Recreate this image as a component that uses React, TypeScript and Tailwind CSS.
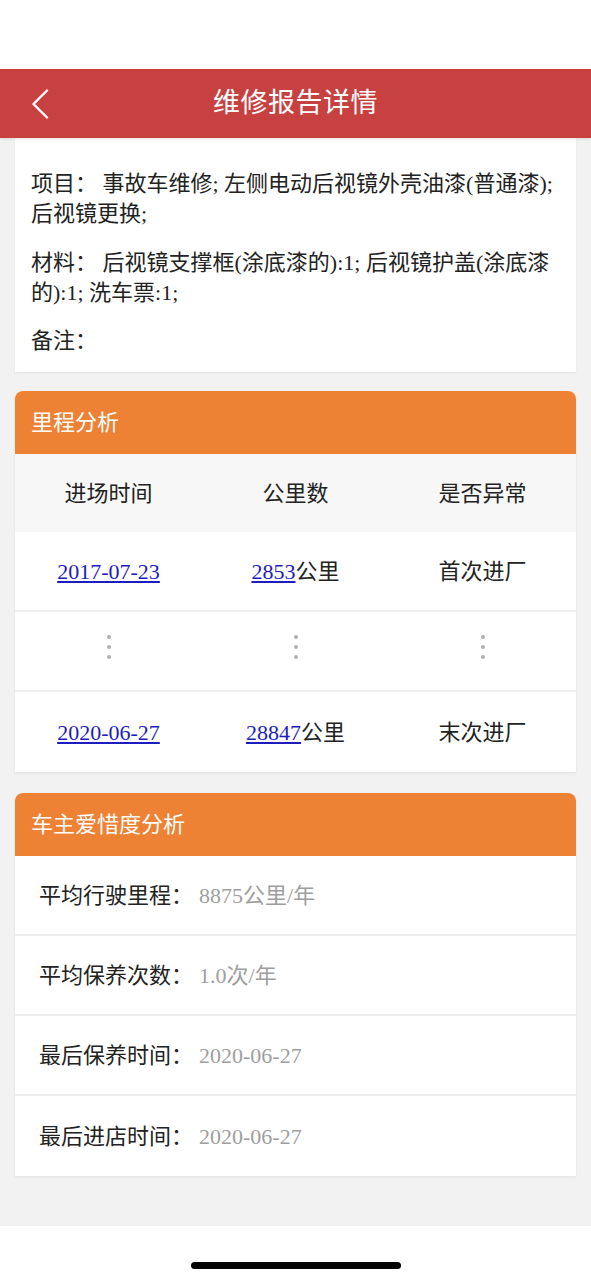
import React from 'react';

const mileageRows = [
  { date: '2017-07-23', km: '2853', note: '首次进厂' },
  { date: '2020-06-27', km: '28847', note: '末次进厂' },
];

const careRows = [
  { label: '平均行驶里程：', value: '8875公里/年' },
  { label: '平均保养次数：', value: '1.0次/年' },
  { label: '最后保养时间：', value: '2020-06-27' },
  { label: '最后进店时间：', value: '2020-06-27' },
];

const VDots: React.FC = () => (
  <div className="flex flex-col items-center gap-[6px] -mt-2">
    <span className="block h-[4px] w-[4px] rounded-full bg-[#b0b0b0]" />
    <span className="block h-[4px] w-[4px] rounded-full bg-[#b0b0b0]" />
    <span className="block h-[4px] w-[4px] rounded-full bg-[#b0b0b0]" />
  </div>
);

const SectionTitle: React.FC<{ title: string }> = ({ title }) => (
  <div className="flex h-[63px] items-center rounded-t-lg bg-[#ed8235] pl-4 text-[22px] text-white">
    {title}
  </div>
);

const App: React.FC = () => {
  return (
    <div
      className="flex min-h-[1280px] w-[591px] flex-col bg-white text-[#222]"
      style={{ fontFamily: "'Liberation Serif', 'Noto Sans CJK SC', serif" }}
    >
      {/* status bar area */}
      <div className="h-[69px] bg-white" />

      <header className="relative z-10 flex h-[69px] items-center justify-center bg-[#c84141] shadow-[0_1px_3px_rgba(0,0,0,0.12)]">
        <button className="absolute left-[31px] top-[20px]" aria-label="back">
          <svg width="18" height="30" viewBox="0 0 18 30" fill="none">
            <path d="M16 1.5 L2.5 15 L16 28.5" stroke="white" strokeWidth="2.4" strokeLinecap="round" strokeLinejoin="round" />
          </svg>
        </button>
        <h1 className="text-[27px] tracking-[0.5px] text-white">维修报告详情</h1>
      </header>

      <main className="flex-1 bg-[#f2f2f2] px-[15px] pb-[50px]">
        {/* report details */}
        <section className="bg-white px-4 pb-4 pt-[31px] text-[22px] leading-[30px] shadow-[0_1px_2px_rgba(0,0,0,0.06)]">
          <p>项目： 事故车维修; 左侧电动后视镜外壳油漆(普通漆); 后视镜更换;</p>
          <p className="mt-[19px]">材料： 后视镜支撑框(涂底漆的):1; 后视镜护盖(涂底漆的):1; 洗车票:1;</p>
          <p className="mt-[18px]">备注：</p>
        </section>

        {/* mileage */}
        <section className="mt-[19px] rounded-t-lg bg-white shadow-[0_1px_3px_rgba(0,0,0,0.08)]">
          <SectionTitle title="里程分析" />
          <div className="grid h-[78px] grid-cols-3 items-center bg-[#f7f7f7] text-center text-[22px]">
            <span>进场时间</span>
            <span>公里数</span>
            <span>是否异常</span>
          </div>
          <div className="grid h-[80px] grid-cols-3 items-center border-b-2 border-[#efefef] text-center text-[22px]">
            <a href="#" className="text-[#1d1dbf] underline underline-offset-2">{mileageRows[0].date}</a>
            <span>
              <a href="#" className="text-[#1d1dbf] underline underline-offset-2">{mileageRows[0].km}</a>公里
            </span>
            <span>{mileageRows[0].note}</span>
          </div>
          <div className="grid h-[80px] grid-cols-3 items-center border-b-2 border-[#efefef]">
            <VDots />
            <VDots />
            <VDots />
          </div>
          <div className="grid h-[80px] grid-cols-3 items-center text-center text-[22px]">
            <a href="#" className="text-[#1d1dbf] underline underline-offset-2">{mileageRows[1].date}</a>
            <span>
              <a href="#" className="text-[#1d1dbf] underline underline-offset-2">{mileageRows[1].km}</a>公里
            </span>
            <span>{mileageRows[1].note}</span>
          </div>
        </section>

        {/* owner care */}
        <section className="mt-[21px] rounded-t-lg bg-white shadow-[0_1px_3px_rgba(0,0,0,0.08)]">
          <SectionTitle title="车主爱惜度分析" />
          {careRows.map((row, i) => (
            <div
              key={row.label}
              className={`flex h-[80px] items-center pl-6 text-[22px] ${i < careRows.length - 1 ? 'border-b-2 border-[#efefef]' : ''}`}
            >
              <span>{row.label}</span>
              <span className="ml-[6px] text-[#9e9e9e]">{row.value}</span>
            </div>
          ))}
        </section>
      </main>

      {/* home indicator */}
      <div className="flex h-[54px] justify-center bg-white pt-[36px]">
        <div className="h-[7px] w-[210px] rounded-full bg-black" />
      </div>
    </div>
  );
};

export default App;
